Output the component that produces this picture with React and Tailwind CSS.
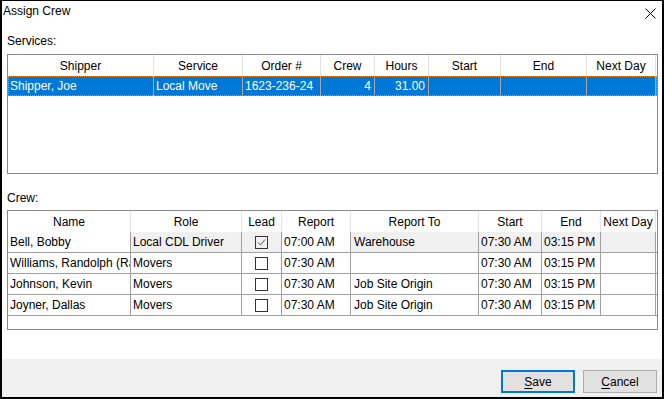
import React from "react";

const font = { fontFamily: '"Liberation Sans", Arial, sans-serif' };

const serviceCols = [
  { label: "Shipper", w: "w-[146px]" },
  { label: "Service", w: "w-[89px]" },
  { label: "Order #", w: "w-[78px]" },
  { label: "Crew", w: "w-[54px]" },
  { label: "Hours", w: "w-[54px]" },
  { label: "Start", w: "w-[72px]" },
  { label: "End", w: "w-[86px]" },
  { label: "Next Day", w: "w-[69px]" },
];

const serviceRow = ["Shipper, Joe", "Local Move", "1623-236-24", "4", "31.00", "", "", ""];
const rightAligned = [3, 4];

const crewCols = [
  { label: "Name", w: "w-[123px]" },
  { label: "Role", w: "w-[111px]" },
  { label: "Lead", w: "w-[40px]" },
  { label: "Report", w: "w-[69px]" },
  { label: "Report To", w: "w-[128px]" },
  { label: "Start", w: "w-[63px]" },
  { label: "End", w: "w-[59px]" },
  { label: "Next Day", w: "w-[55px]" },
];

const crew = [
  { name: "Bell, Bobby", role: "Local CDL Driver", lead: true, report: "07:00 AM", to: "Warehouse", start: "07:30 AM", end: "03:15 PM" },
  { name: "Williams, Randolph (Randy)", role: "Movers", lead: false, report: "07:30 AM", to: "", start: "07:30 AM", end: "03:15 PM" },
  { name: "Johnson, Kevin", role: "Movers", lead: false, report: "07:30 AM", to: "Job Site Origin", start: "07:30 AM", end: "03:15 PM" },
  { name: "Joyner, Dallas", role: "Movers", lead: false, report: "07:30 AM", to: "Job Site Origin", start: "07:30 AM", end: "03:15 PM" },
];

const Checkbox = ({ checked }) => (
  <div className="w-[13px] h-[13px] border border-[#333333] bg-transparent flex items-center justify-center">
    {checked && (
      <svg width="11" height="11" viewBox="0 0 11 11">
        <path d="M2 5.5 L4.5 8 L9 2.5" fill="none" stroke="#555555" strokeWidth="1" />
      </svg>
    )}
  </div>
);

// Header row shared by both grids
const HeaderRow = ({ cols }) => (
  <div className="flex h-[21px]">
    {cols.map((c) => (
      <div
        key={c.label}
        className={`${c.w} shrink-0 border-r border-[#e3e3e3] flex items-center justify-center leading-[14px] whitespace-nowrap overflow-hidden`}
      >
        {c.label}
      </div>
    ))}
  </div>
);

export default function App() {
  return (
    <div
      className="w-[664px] h-[399px] bg-white border-t border-x-2 border-b-2 border-black flex flex-col text-[12px] text-black"
      style={font}
    >
      {/* Title bar */}
      <div className="h-[24px] flex justify-between shrink-0">
        <div className="pl-[1px] pt-[3px] leading-[14px]">Assign Crew</div>
        <svg className="mt-[7px] mr-[6px]" width="11" height="11" viewBox="0 0 11 11">
          <path d="M0.5 0.5 L10.5 10.5 M10.5 0.5 L0.5 10.5" stroke="#000" strokeWidth="1" />
        </svg>
      </div>

      <div className="mt-[9px] ml-[5px] leading-[14px]">Services:</div>

      {/* Services grid */}
      <div className="mt-[6px] ml-[5px] w-[651px] h-[120px] border border-[#8a8a8a] shrink-0 overflow-hidden">
        <HeaderRow cols={serviceCols} />
        <div className="flex h-[20px] bg-[#0078d7] text-white outline outline-1 outline-dotted outline-[#f08c28] -outline-offset-1">
          {serviceCols.map((c, i) => (
            <div
              key={c.label}
              className={`${c.w} shrink-0 border-r border-[#a4a9b0] flex items-center leading-[14px] whitespace-nowrap overflow-hidden ${
                rightAligned.includes(i) ? "justify-end pr-[3px]" : "pl-[2px]"
              }`}
            >
              {serviceRow[i]}
            </div>
          ))}
        </div>
      </div>

      <div className="mt-[17px] ml-[5px] leading-[14px]">Crew:</div>

      {/* Crew grid */}
      <div className="mt-[5px] ml-[5px] w-[651px] h-[120px] border border-[#8a8a8a] shrink-0 overflow-hidden">
        <HeaderRow cols={crewCols} />
        {crew.map((r, idx) => {
          const gray = idx === 0 ? "bg-[#f0f0f0]" : "";
          const cell = "shrink-0 border-r border-[#a0a0a0] flex items-center leading-[14px] whitespace-nowrap overflow-hidden";
          return (
            <div key={r.name} className="flex h-[21px] border-b border-[#a0a0a0]">
              <div className={`w-[123px] ${cell} pl-[2px]`}>{r.name}</div>
              <div className={`w-[111px] ${cell} pl-[2px] ${gray}`}>{r.role}</div>
              <div className={`w-[40px] ${cell} justify-center ${gray}`}>
                <Checkbox checked={r.lead} />
              </div>
              <div className={`w-[69px] ${cell} pl-[2px]`}>{r.report}</div>
              <div className={`w-[128px] ${cell} pl-[3px] ${gray}`}>{r.to}</div>
              <div className={`w-[63px] ${cell} pl-[2px] ${gray}`}>{r.start}</div>
              <div className={`w-[59px] ${cell} pl-[2px] ${gray}`}>{r.end}</div>
              <div className={`w-[55px] ${cell} ${gray}`}></div>
            </div>
          );
        })}
      </div>

      <div className="flex-1" />

      {/* Footer */}
      <div className="h-[38px] bg-[#f0f0f0] flex justify-end items-start gap-[8px] pt-[11px] pr-[5px] shrink-0">
        <button className="w-[74px] h-[23px] border-2 border-[#0078d7] bg-[#e1e1e1] leading-[14px]">
          <span className="underline underline-offset-2">S</span>ave
        </button>
        <button className="w-[74px] h-[23px] border border-[#adadad] bg-[#e1e1e1] leading-[14px]">
          <span className="underline underline-offset-2">C</span>ancel
        </button>
      </div>
    </div>
  );
}
